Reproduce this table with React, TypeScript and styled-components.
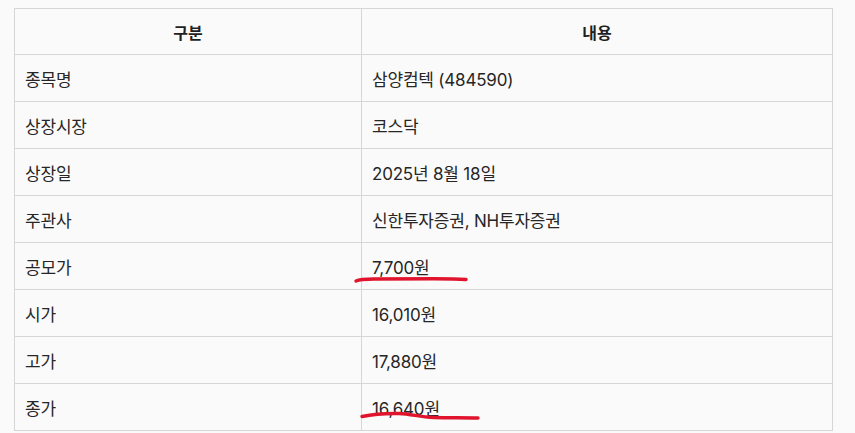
import React from "react";
import styled, { createGlobalStyle } from "styled-components";

const Global = createGlobalStyle`
  html, body { margin: 0; padding: 0; background: #fafafa; }
  body { font-family: Inter, "Noto Sans CJK KR", sans-serif; color: #222; }
`;

const Page = styled.div`
  padding: 8px 22px 0 14px;
`;

const Wrap = styled.div`
  position: relative;
  width: 819px;
`;

const Table = styled.table`
  width: 819px;
  border-collapse: collapse;
  table-layout: fixed;
  background: #fafafa;
`;

const Th = styled.th`
  height: 46px;
  padding: 0 10px;
  border: 1px solid #d6d6d6;
  font-size: 16px;
  font-weight: 700;
  text-align: center;
  color: #1f1f1f;
  box-sizing: border-box;
`;

const Td = styled.td`
  height: 47px;
  padding: 0 10px;
  border: 1px solid #d6d6d6;
  font-size: 17px;
  text-align: left;
  color: #262626;
  box-sizing: border-box;
  letter-spacing: -0.2px;
`;

const Marks = styled.svg`
  position: absolute;
  left: 0;
  top: 0;
  pointer-events: none;
  overflow: visible;
`;

const rows: [string, string][] = [
  ["종목명", "삼양컴텍 (484590)"],
  ["상장시장", "코스닥"],
  ["상장일", "2025년 8월 18일"],
  ["주관사", "신한투자증권, NH투자증권"],
  ["공모가", "7,700원"],
  ["시가", "16,010원"],
  ["고가", "17,880원"],
  ["종가", "16,640원"],
];

export default function App() {
  return (
    <Page>
      <Global />
      <Wrap>
        <Table>
          <colgroup>
            <col style={{ width: 347 }} />
            <col />
          </colgroup>
          <thead>
            <tr>
              <Th>구분</Th>
              <Th>내용</Th>
            </tr>
          </thead>
          <tbody>
            {rows.map(([k, v]) => (
              <tr key={k}>
                <Td>{k}</Td>
                <Td>{v}</Td>
              </tr>
            ))}
          </tbody>
        </Table>
        <Marks width="819" height="430" viewBox="0 0 819 430">
          <path
            d="M342 273 C345 271.5 350 271 360 271 L420 270.8 C435 270.8 445 271 452 271.5"
            fill="none"
            stroke="#e0142c"
            strokeWidth="3.4"
            strokeLinecap="round"
          />
          <path
            d="M348 408.5 C360 406 372 405.2 385 405.5 C398 406 405 409 420 409.5 C435 410 450 409.5 464 410"
            fill="none"
            stroke="#e0142c"
            strokeWidth="3.4"
            strokeLinecap="round"
          />
        </Marks>
      </Wrap>
    </Page>
  );
}
